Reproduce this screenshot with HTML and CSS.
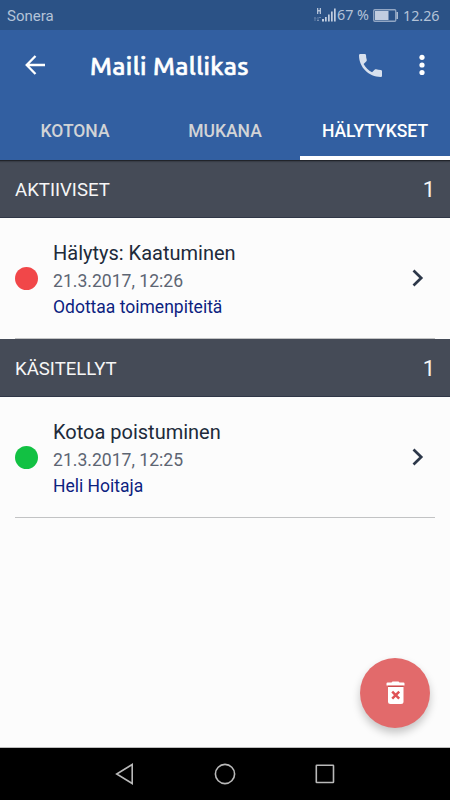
FILE: index.html
```html
<!doctype html>
<html lang="fi">
<head>
    <meta charset="UTF-8">
    <meta name="viewport" content="width=device-width, initial-scale=1.0">
    <title>Maili Mallikas</title>
    <link rel="stylesheet" href="styles.css">
</head>
<body>
    <div class="app">
        <div class="statusbar">
            <span class="carrier">Sonera</span>
            <svg class="signal" width="22" height="16" viewBox="0 0 22 16" fill="#c1cde0">
                <path d="M3 1h1.300v2h1.400V1H7v6H5.700V4.500H4.300V7H3z" opacity=".9"/>
                <path d="M1 14v-3.500M0 11.500l1-1 1 1M4 10v4M3 13l1 1 1-1M5 10.500h2" fill="none" stroke="#c1cde0" stroke-width=".8" opacity=".5"/>
                <path d="M8 12h2v2.500H8zM11 10h1.700v4.500H11zM14 7.500h1.700v7H14zM17 4.500h1.700v10H17zM20 1.500h1.700v13H20z"/>
            </svg>
            <span class="percent">67 %</span>
            <svg class="battery" width="26" height="13" viewBox="0 0 26 13">
                <rect x=".75" y=".75" width="22" height="11.500" rx="1" fill="none" stroke="#93a7c4" stroke-width="1.300"/>
                <path d="M2 2h13.500v9H2z" fill="#c1cde0"/>
                <path d="M23.400 3H25v7h-1.600z" fill="#a9b9d0"/>
            </svg>
            <span class="clock">12.26</span>
        </div>

        <header class="toolbar">
            <svg class="back" width="20" height="20" viewBox="0 0 20 20" fill="none" stroke="#fff" stroke-width="2.300">
                <path d="M20 10H2M10.500 1L1.700 10l8.800 9"/>
            </svg>
            <h1>Maili Mallikas</h1>
            <svg class="phone" width="23" height="23" viewBox="3 3 18 18" fill="#d8e1ee">
                <path d="M6.620 10.790c1.440 2.830 3.760 5.140 6.590 6.590l2.200-2.200c.27-.27.67-.36 1.020-.24 1.120.37 2.330.57 3.570.57.55 0 1 .45 1 1V20c0 .55-.45 1-1 1C10.610 21 3 13.390 3 4c0-.55.45-1 1-1h3.500c.55 0 1 .45 1 1 0 1.250.2 2.450.57 3.570.11.35.03.74-.25 1.020l-2.200 2.200z"/>
            </svg>
            <svg class="more" width="6" height="22" viewBox="0 0 6 22" fill="#fff">
                <circle cx="3" cy="3.300" r="2.600"/>
                <circle cx="3" cy="11" r="2.600"/>
                <circle cx="3" cy="18.500" r="2.600"/>
            </svg>
        </header>

        <nav class="tabs">
            <div class="tab">KOTONA</div>
            <div class="tab">MUKANA</div>
            <div class="tab active">HÄLYTYKSET</div>
        </nav>

        <main class="content">
            <div class="section">
                <span>AKTIIVISET</span>
                <span class="count">1</span>
            </div>
            <div class="item">
                <span class="dot red"></span>
                <div class="info">
                    <div class="name">Hälytys: Kaatuminen</div>
                    <div class="date">21.3.2017, 12:26</div>
                    <div class="state">Odottaa toimenpiteitä</div>
                </div>
                <svg class="chevron" width="12" height="18" viewBox="0 0 12 18" fill="none" stroke="#2c3749" stroke-width="2.700">
                    <path d="M1.500 1.500L9.200 9l-7.700 7.500"/>
                </svg>
            </div>

            <div class="section">
                <span>KÄSITELLYT</span>
                <span class="count">1</span>
            </div>
            <div class="item">
                <span class="dot green"></span>
                <div class="info">
                    <div class="name">Kotoa poistuminen</div>
                    <div class="date">21.3.2017, 12:25</div>
                    <div class="state">Heli Hoitaja</div>
                </div>
                <svg class="chevron" width="12" height="18" viewBox="0 0 12 18" fill="none" stroke="#2c3749" stroke-width="2.700">
                    <path d="M1.500 1.500L9.200 9l-7.700 7.500"/>
                </svg>
            </div>
        </main>

        <button class="fab" aria-label="Poista">
            <svg width="19" height="24" viewBox="0 0 19 24">
                <path d="M.5 2.500Q.5 1.500 1.500 1.500H5.500L6.500.5h6l1 1h4q1 0 1 1V4.500H.5z" fill="#fff"/>
                <path d="M2 6h15.500v14.500q0 2.500-2.500 2.500H4.500Q2 23 2 20.500z" fill="#fff"/>
                <path d="M2 5.300h15.500" stroke="#c94648" stroke-width="1"/>
                <path d="M6.200 10.700l7 7M13.200 10.700l-7 7" stroke="#df5356" stroke-width="2.500"/>
            </svg>
        </button>

        <div class="navbar">
            <svg width="20" height="22" viewBox="0 0 20 22"><path d="M17.200 1.500v19L1.700 11z"/></svg>
            <svg width="22" height="22" viewBox="0 0 22 22"><circle cx="11" cy="11" r="9.600"/></svg>
            <svg width="20" height="20" viewBox="0 0 20 20"><rect x="1.300" y="1.300" width="17.200" height="17.200" rx=".5"/></svg>
        </div>
    </div>
</body>
</html>
```

FILE: styles.css
```css
* {
    margin: 0;
    padding: 0;
    box-sizing: border-box;
}
body {
    font-family: Roboto, sans-serif;
    background-color: #fcfcfc;
}
svg {
    display: block;
    flex-shrink: 0;
}
.app {
    position: relative;
    display: flex;
    flex-direction: column;
    width: 450px;
    height: 800px;
    overflow: hidden;
}
.statusbar {
    display: flex;
    align-items: center;
    height: 30px;
    padding: 0 10px 0 7px;
    background-color: #2b5286;
    color: #b4c3d8;
    font-size: 15px;
}
.carrier {
    flex: 1;
    padding-top: 1px;
}
.percent, .clock {
    font-family: "Noto Sans", sans-serif;
    font-size: 14.3px;
    white-space: nowrap;
}
.percent {
    width: 35px;
    padding-left: 1px;
    padding-bottom: 1px;
}
.battery {
    margin-left: 2px;
}
.clock {
    width: 37px;
    margin-left: 4px;
}
.toolbar {
    display: flex;
    align-items: center;
    height: 70px;
    padding: 0 25px;
    background-color: #325fa1;
}
h1 {
    flex: 1;
    margin-left: 45px;
    padding-top: 1px;
    color: #fff;
    font-family: Ubuntu, "Noto Sans", sans-serif;
    font-size: 25px;
    font-weight: 500;
    letter-spacing: 0.35px;
    -webkit-text-stroke: 0.6px #fff;
    white-space: nowrap;
}
.phone {
    margin-right: 37px;
}
.tabs {
    display: grid;
    grid-template-columns: repeat(3, 1fr);
    height: 60px;
    background-color: #325fa1;
}
.tab {
    display: flex;
    align-items: center;
    justify-content: center;
    color: #d2d4d6;
    font-size: 17.5px;
    font-weight: 500;
    border-bottom: 4px solid transparent;
    padding-top: 5px;
}
.tab.active {
    color: #fff;
    border-color: #fff;
}
.content {
    flex: 1;
    border-bottom: 1px solid #bdbdbd;
}
.section {
    display: flex;
    align-items: center;
    justify-content: space-between;
    height: 58px;
    padding: 2px 15px 0;
    background-color: #454b57;
    border-bottom: 1px solid #303747;
    color: #f6f6f6;
    font-size: 18.6px;
}
.section:first-child {
    box-shadow: inset 0 3px 2px -2px rgba(0, 0, 0, 0.7);
}
.count {
    font-size: 22px;
}
.item {
    display: flex;
    align-items: center;
    height: 121px;
    margin: 0 15px;
    border-bottom: 1px solid #c2c3c4;
}
.dot {
    width: 23px;
    height: 23px;
    border-radius: 50%;
}
.red {
    background-color: #f14749;
}
.green {
    background-color: #12c143;
}
.info {
    flex: 1;
    margin-left: 15px;
    padding-top: 4px;
}
.name {
    color: #202a3a;
    font-size: 20px;
    line-height: 29px;
}
.date {
    color: #5d6573;
    font-size: 17.6px;
    line-height: 26px;
}
.state {
    color: #0c2280;
    font-size: 17.5px;
    line-height: 27px;
}
.chevron {
    margin-right: 11px;
}
.fab {
    position: absolute;
    right: 20px;
    bottom: 72.5px;
    display: flex;
    align-items: center;
    justify-content: center;
    width: 70px;
    height: 70px;
    border: none;
    border-radius: 50%;
    background-color: #e26a6b;
    box-shadow: 0 5px 9px rgba(0, 0, 0, 0.22);
}
.navbar {
    display: flex;
    align-items: center;
    justify-content: center;
    gap: 79px;
    height: 52px;
    background-color: #000;
}
.navbar svg {
    fill: none;
    stroke: #b9b9b9;
    stroke-width: 1.6;
}
```
